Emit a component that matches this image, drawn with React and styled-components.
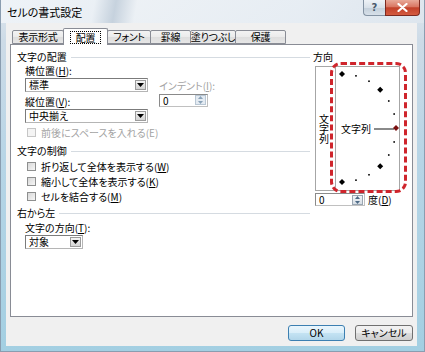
import React from "react";
import styled, { createGlobalStyle } from "styled-components";

const GlobalStyle = createGlobalStyle`
  html, body { margin: 0; padding: 0; background: #fff; }
  body {
    font-family: "Noto Sans CJK JP", "Noto Sans", sans-serif;
    font-size: 10px;
    color: #000;
    overflow: hidden;
  }
  * { box-sizing: border-box; }
`;

function DownArrow() {
  return (
    <svg width="7" height="4" viewBox="0 0 7 4">
      <path d="M0 0 H7 L3.5 4 Z" fill="#000" />
    </svg>
  );
}

function SpinArrows({ color = "#4d6a86" }) {
  return (
    <svg width="7" height="10" viewBox="0 0 7 10">
      <path d="M1 4 L3.5 1 L6 4 Z" fill={color} />
      <path d="M1 6 L3.5 9 L6 6 Z" fill={color} />
    </svg>
  );
}

// dial of the orientation box: dots every 15 degrees, diamonds every 45
function DialMarks() {
  const cx = 6;
  const cy = 61;
  const r = 54;
  const marks = [];
  for (let a = 90; a >= -90; a -= 15) {
    const rad = (a * Math.PI) / 180;
    const x = cx + r * Math.cos(rad);
    const y = cy - r * Math.sin(rad);
    if (a % 45 === 0) {
      const s = 3;
      marks.push(
        <path
          key={a}
          d={`M${x} ${y - s} L${x + s} ${y} L${x} ${y + s} L${x - s} ${y} Z`}
          fill={a === 0 ? "#7a1010" : "#000"}
        />
      );
    } else {
      marks.push(<rect key={a} x={x - 0.8} y={y - 0.8} width="1.6" height="1.6" fill="#000" />);
    }
  }
  return (
    <DialSvg width="63" height="123" viewBox="0 0 63 123">
      {marks}
    </DialSvg>
  );
}

function Combo({ w, value }) {
  return (
    <ComboBox $w={w}>
      <ComboText>{value}</ComboText>
      <DropButton>
        <DownArrow />
      </DropButton>
    </ComboBox>
  );
}

function Spinner({ w, value, disabled }) {
  return (
    <SpinBox $w={w}>
      <SpinText>{value}</SpinText>
      <SpinButton $disabled={disabled}>
        <SpinArrows color={disabled ? "#8aa2b8" : "#4d6a86"} />
      </SpinButton>
    </SpinBox>
  );
}

function Check({ children, disabled }) {
  return (
    <CheckRow $disabled={disabled}>
      <CheckBox $disabled={disabled} />
      <span>{children}</span>
    </CheckRow>
  );
}

const tabs = [
  { label: "表示形式", w: 52 },
  { label: "配置", w: 45, active: true },
  { label: "フォント", w: 44 },
  { label: "罫線", w: 41 },
  { label: "塗りつぶし", w: 46 },
  { label: "保護", w: 51 },
];

export default function App() {
  return (
    <>
      <GlobalStyle />
      <Window>
        <TitleBar>
          <Title>セルの書式設定</Title>
          <Caption>
            <HelpButton>?</HelpButton>
            <CloseButton>
              <svg width="11" height="9" viewBox="0 0 11 9">
                <path d="M1.5 1 L9.5 8 M9.5 1 L1.5 8" stroke="#fff" strokeWidth="2.2" strokeLinecap="round" />
              </svg>
            </CloseButton>
          </Caption>
        </TitleBar>

        <Client>
          <TabStrip>
            {tabs.map((t) => (
              <Tab key={t.label} $w={t.w} $active={t.active}>
                {t.active ? <Focus>{t.label}</Focus> : t.label}
              </Tab>
            ))}
          </TabStrip>

          <Panel>
            <LeftCol>
              <SectionHeader>
                <span>文字の配置</span>
                <Rule />
              </SectionHeader>
              <Indent>
                <AlignGrid>
                  <Cell $col={1} $row={1} $align="end">
                    <Label>
                      横位置(<u>H</u>):
                    </Label>
                  </Cell>
                  <Cell $col={1} $row={2}>
                    <Combo w={123} value="標準" />
                  </Cell>
                  <Cell $col={3} $row={2} $align="end">
                    <IndentLabel>
                      インデント(<u>I</u>):
                    </IndentLabel>
                  </Cell>
                  <Cell $col={1} $row={3} $align="end">
                    <VLabel>
                      縦位置(<u>V</u>):
                    </VLabel>
                  </Cell>
                  <Cell $col={3} $row={3} $align="center">
                    <Spinner w={49} value="0" disabled />
                  </Cell>
                  <Cell $col={1} $row={5}>
                    <Combo w={123} value="中央揃え" />
                  </Cell>
                </AlignGrid>
                <Check disabled>前後にスペースを入れる(E)</Check>
              </Indent>

              <SectionHeader $top={5}>
                <span>文字の制御</span>
                <Rule />
              </SectionHeader>
              <Indent $top={2}>
                <Check>
                  折り返して全体を表示する(<u>W</u>)
                </Check>
                <Check>
                  縮小して全体を表示する(<u>K</u>)
                </Check>
                <Check>
                  セルを結合する(<u>M</u>)
                </Check>
              </Indent>

              <SectionHeader $top={3}>
                <span>右から左</span>
                <Rule />
              </SectionHeader>
              <Indent $top={2}>
                <Label>
                  文字の方向(<u>T</u>):
                </Label>
                <Combo w={58} value="対象" />
              </Indent>
            </LeftCol>

            <RightCol>
              <SectionHeader>
                <span>方向</span>
              </SectionHeader>
              <OrientBox>
                <VerticalStrip>
                  <VerticalText>文字列</VerticalText>
                </VerticalStrip>
                <Dial>
                  <DialMarks />
                  <DialLabel>文字列</DialLabel>
                  <DialLine />
                </Dial>
              </OrientBox>
              <DegreeRow>
                <Spinner w={50} value="0" />
                <DegreeLabel>
                  度(<u>D</u>)
                </DegreeLabel>
              </DegreeRow>
              <Highlight />
            </RightCol>
          </Panel>

          <ButtonRow>
            <Button $w={57} $primary>
              OK
            </Button>
            <Button $w={58}>キャンセル</Button>
          </ButtonRow>
        </Client>
      </Window>
    </>
  );
}

const Window = styled.div`
  width: 425px;
  height: 352px;
  display: flex;
  flex-direction: column;
  background: linear-gradient(180deg, #dfe7ee 0, #cddbe7 40px, #b7d5e6 160px, #a3cfe2 100%);
  font-feature-settings: "palt";
  border: 1px solid #8a9db0;
  border-top: none;
`;

const TitleBar = styled.div`
  height: 23px;
  flex: none;
  display: flex;
  align-items: flex-start;
  padding-left: 6px;
  background: linear-gradient(
    100deg,
    rgba(240, 244, 248, 0.9) 0%,
    rgba(236, 241, 246, 0.9) 22%,
    rgba(196, 208, 220, 0.9) 27%,
    rgba(238, 242, 246, 0.9) 32%,
    rgba(232, 238, 244, 0.9) 70%,
    rgba(222, 230, 238, 0.9) 100%
  );
`;

const Title = styled.div`
  flex: 1;
  margin-top: 6px;
  font-size: 11px;
  line-height: 12px;
`;

const Caption = styled.div`
  display: flex;
  margin-right: 4px;
`;

const HelpButton = styled.div`
  width: 22px;
  height: 16px;
  border: 1px solid #8493a3;
  border-top: none;
  border-right: none;
  border-radius: 0 0 0 4px;
  background: linear-gradient(180deg, #eef2f6 0%, #d9e1e9 50%, #c3cfda 51%, #d7e0e9 100%);
  display: flex;
  align-items: center;
  justify-content: center;
  font-family: "DejaVu Sans", sans-serif;
  font-size: 10px;
  font-weight: bold;
  color: #4a5a6c;
`;

const CloseButton = styled.div`
  width: 35px;
  height: 16px;
  border: 1px solid #7c2a20;
  border-top: none;
  border-radius: 0 0 4px 0;
  background: linear-gradient(180deg, #e8a999 0%, #d97763 45%, #c2412a 52%, #d45b40 100%);
  display: flex;
  align-items: center;
  justify-content: center;
`;

const Client = styled.div`
  flex: 1;
  margin: 0 7px 5px 5px;
  background: #f0f0f0;
  display: flex;
  flex-direction: column;
  padding: 5px 4px 0;
`;

const TabStrip = styled.div`
  height: 16px;
  display: flex;
  align-items: flex-end;
  padding-left: 2px;
  position: relative;
  z-index: 1;
`;

const Tab = styled.div`
  width: ${(p) => p.$w}px;
  height: ${(p) => (p.$active ? 17 : 14)}px;
  margin-right: -1px;
  margin-bottom: ${(p) => (p.$active ? -1 : 0)}px;
  border: 1px solid #898c95;
  border-bottom: ${(p) => (p.$active ? "none" : "1px solid #898c95")};
  border-radius: 2px 2px 0 0;
  background: ${(p) => (p.$active ? "#fff" : "linear-gradient(180deg, #f3f3f3 0%, #ebebeb 50%, #dedede 51%, #e6e6e6 100%)")};
  display: flex;
  align-items: center;
  justify-content: center;
  line-height: 12px;
  white-space: nowrap;
  letter-spacing: -0.3px;
  position: relative;
  z-index: ${(p) => (p.$active ? 2 : 1)};
`;

const Focus = styled.span`
  border: 1px dotted #000;
  padding: 0 5px;
  line-height: 11px;
`;

const Panel = styled.div`
  height: 273px;
  flex: none;
  background: #fff;
  border: 1px solid #898c95;
  display: grid;
  grid-template-columns: 293px 92px;
  column-gap: 3px;
  align-items: start;
  padding: 6px 7px 0 6px;
`;

const LeftCol = styled.div`
  display: flex;
  flex-direction: column;
`;

const RightCol = styled.div`
  display: flex;
  flex-direction: column;
  position: relative;
`;

const SectionHeader = styled.div`
  height: 12px;
  margin-top: ${(p) => p.$top || 0}px;
  display: flex;
  align-items: center;
  gap: 4px;
  line-height: 12px;
  white-space: nowrap;
`;

const Rule = styled.div`
  flex: 1;
  height: 1px;
  background: #d5dbe1;
`;

const Indent = styled.div`
  display: flex;
  flex-direction: column;
  align-items: flex-start;
  padding-left: 8px;
  margin-top: ${(p) => p.$top || 0}px;
`;

const AlignGrid = styled.div`
  display: grid;
  grid-template-columns: 123px 11px 49px;
  grid-template-rows: 15px 14px 16px 1px 14px;
`;

const Cell = styled.div`
  grid-column: ${(p) => p.$col};
  grid-row: ${(p) => p.$row};
  align-self: ${(p) => p.$align || "start"};
`;

const Label = styled.div`
  height: 14px;
  line-height: 14px;
  white-space: nowrap;
`;

const IndentLabel = styled.div`
  line-height: 12px;
  color: #a3a3a3;
  white-space: nowrap;
`;

const VLabel = styled.div`
  line-height: 13px;
  white-space: nowrap;
`;

const ComboBox = styled.div`
  width: ${(p) => p.$w}px;
  height: 14px;
  border: 1px solid #7b7b7b;
  border-right-color: #b5b5b5;
  border-bottom-color: #b5b5b5;
  background: #fff;
  display: flex;
  align-items: center;
  padding: 0 1px 0 3px;
`;

const ComboText = styled.span`
  flex: 1;
  line-height: 12px;
  white-space: nowrap;
`;

const DropButton = styled.div`
  width: 11px;
  height: 10px;
  border: 1px solid #9c9c9c;
  background: linear-gradient(180deg, #f6f6f6 0%, #e2e2e2 50%, #d4d4d4 100%);
  display: flex;
  align-items: center;
  justify-content: center;
`;

const SpinBox = styled.div`
  width: ${(p) => p.$w}px;
  height: 13px;
  border: 1px solid #8a8a8a;
  border-right-color: #c0c0c0;
  border-bottom-color: #c0c0c0;
  background: #fff;
  display: flex;
  align-items: center;
  padding: 0 1px 0 3px;
`;

const SpinText = styled.span`
  flex: 1;
  line-height: 11px;
`;

const SpinButton = styled.div`
  width: 11px;
  height: 10px;
  border: 1px solid ${(p) => (p.$disabled ? "#b9c7d4" : "#9aa6b2")};
  background: ${(p) => (p.$disabled ? "#e4ebf2" : "linear-gradient(180deg, #f1f4f7, #d7dee5)")};
  display: flex;
  align-items: center;
  justify-content: center;
`;

const CheckRow = styled.div`
  height: 15px;
  display: flex;
  align-items: center;
  gap: 5px;
  padding-left: 2px;
  line-height: 12px;
  white-space: nowrap;
  color: ${(p) => (p.$disabled ? "#a3a3a3" : "#000")};
  margin-top: ${(p) => (p.$disabled ? 2 : 0)}px;
`;

const CheckBox = styled.div`
  width: 9px;
  height: 9px;
  border: 1px solid ${(p) => (p.$disabled ? "#c6c6c6" : "#8e8f8f")};
  background: ${(p) => (p.$disabled ? "#f4f4f4" : "linear-gradient(135deg, #d8d8d8 0%, #f6f6f6 100%)")};
`;

const OrientBox = styled.div`
  width: 85px;
  height: 125px;
  margin: 3px 0 0 2px;
  border: 1px solid #a6a6a6;
  display: flex;
`;

const VerticalStrip = styled.div`
  width: 20px;
  border-right: 1px solid #a6a6a6;
  display: flex;
  align-items: center;
  justify-content: center;
  padding-right: 4px;
`;

const VerticalText = styled.span`
  writing-mode: vertical-rl;
  text-orientation: upright;
  line-height: 10px;
  letter-spacing: 0;
`;

const Dial = styled.div`
  flex: 1;
  position: relative;
  display: flex;
  align-items: center;
  padding-left: 5px;
`;

const DialSvg = styled.svg`
  position: absolute;
  left: 0;
  top: 0;
`;

const DialLabel = styled.span`
  line-height: 12px;
  white-space: nowrap;
`;

const DialLine = styled.div`
  width: 20px;
  height: 2px;
  margin-left: 3px;
  background: #8a8a8a;
`;

const DegreeRow = styled.div`
  display: flex;
  align-items: center;
  margin: 2px 0 0 2px;
`;

const DegreeLabel = styled.span`
  margin-left: 3px;
  line-height: 12px;
`;

const Highlight = styled.div`
  position: absolute;
  left: 17px;
  top: 11px;
  width: 77px;
  height: 131px;
  border: 3px dashed #cf252c;
  border-radius: 11px;
  pointer-events: none;
`;

const ButtonRow = styled.div`
  display: flex;
  justify-content: flex-end;
  gap: 10px;
  margin-top: 8px;
`;

const Button = styled.div`
  width: ${(p) => p.$w}px;
  height: 16px;
  border: 1px solid ${(p) => (p.$primary ? "#3c7fb1" : "#707070")};
  border-radius: 3px;
  background: ${(p) =>
    p.$primary
      ? "linear-gradient(180deg, #eaf6fd 0%, #d9eef9 49%, #c4e3f3 50%, #b2d6ea 100%)"
      : "linear-gradient(180deg, #f2f2f2 0%, #ebebeb 49%, #dddddd 50%, #cfcfcf 100%)"};
  display: flex;
  align-items: center;
  justify-content: center;
  line-height: 12px;
  font-family: "Noto Sans CJK JP", "Liberation Sans", sans-serif;
`;
